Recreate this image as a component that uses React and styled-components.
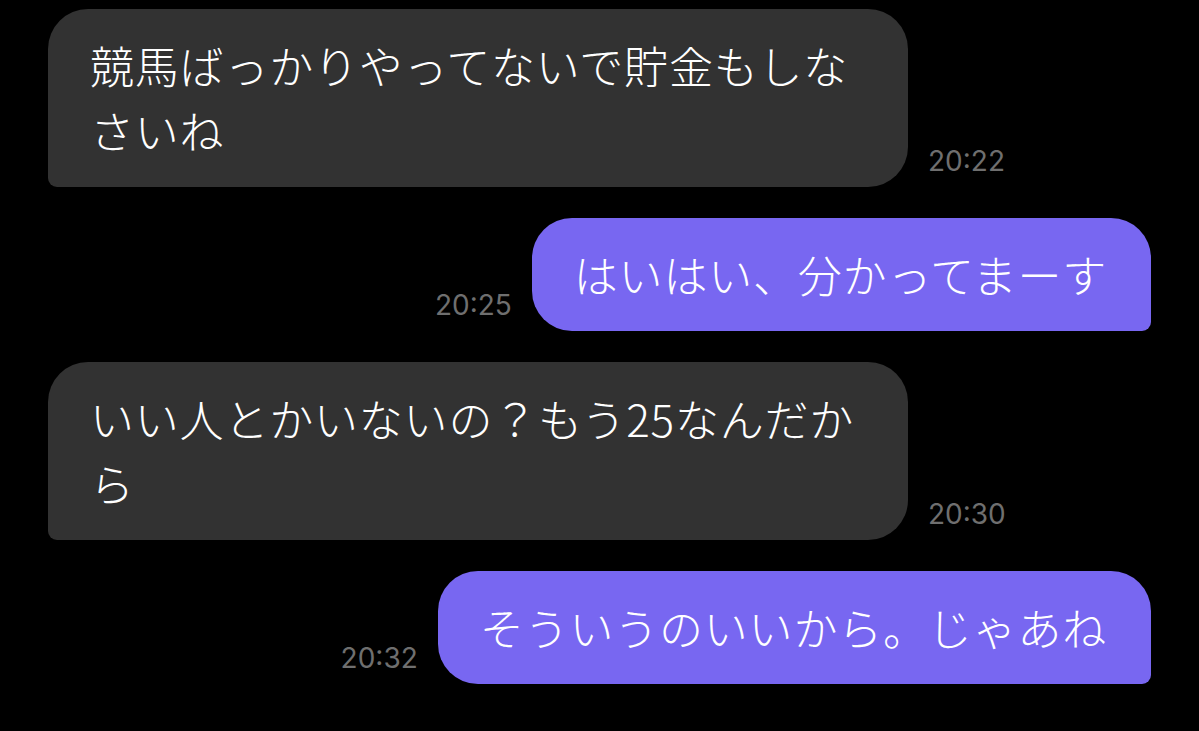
import React from 'react';
import styled, { createGlobalStyle } from 'styled-components';

const GlobalStyle = createGlobalStyle`
  html, body {
    margin: 0;
    padding: 0;
    background: #000000;
  }
  * {
    box-sizing: border-box;
  }
`;

const messages = [
  { id: 1, mine: false, lines: ['競馬ばっかりやってないで貯金もしな', 'さいね'], time: '20:22' },
  { id: 2, mine: true, lines: ['はいはい、分かってまーす'], time: '20:25' },
  { id: 3, mine: false, lines: ['いい人とかいないの？もう25なんだか', 'ら'], time: '20:30' },
  { id: 4, mine: true, lines: ['そういうのいいから。じゃあね'], time: '20:32' },
];

export default function App() {
  return (
    <>
      <GlobalStyle />
      <ChatScreen>
        {messages.map((msg) => (
          <MessageRow key={msg.id} $mine={msg.mine}>
            {msg.mine && <TimeStamp>{msg.time}</TimeStamp>}
            <Bubble $mine={msg.mine} $wide={msg.lines.length > 1}>
              {msg.lines.map((line, i) => (
                <BubbleLine key={i}>{line}</BubbleLine>
              ))}
            </Bubble>
            {!msg.mine && <TimeStamp>{msg.time}</TimeStamp>}
          </MessageRow>
        ))}
      </ChatScreen>
    </>
  );
}

const ChatScreen = styled.div`
  width: 1199px;
  height: 731px;
  background: #000000;
  display: flex;
  flex-direction: column;
  gap: 31px;
  padding: 9px 48px 0 48px;
  overflow: hidden;
`;

const MessageRow = styled.div`
  display: flex;
  align-items: flex-end;
  justify-content: ${(p) => (p.$mine ? 'flex-end' : 'flex-start')};
  gap: 20px;
`;

const Bubble = styled.div`
  display: flex;
  flex-direction: column;
  width: ${(p) => (p.$wide ? '860px' : 'auto')};
  padding: 24px 44px 24px 42px;
  border-radius: ${(p) => (p.$mine ? '40px 40px 9px 40px' : '40px 40px 40px 9px')};
  background: ${(p) => (p.$mine ? '#7867f1' : '#323232')};
`;

const BubbleLine = styled.span`
  font-family: "Noto Sans CJK JP", "Noto Sans", sans-serif;
  font-size: 44px;
  font-weight: 300;
  line-height: 65px;
  letter-spacing: 0.8px;
  color: #ffffff;
  white-space: nowrap;
`;

const TimeStamp = styled.span`
  font-family: Inter, "Liberation Sans", sans-serif;
  font-size: 28px;
  line-height: 28px;
  color: #6f6f6f;
  margin-bottom: 12px;
  flex-shrink: 0;
`;
